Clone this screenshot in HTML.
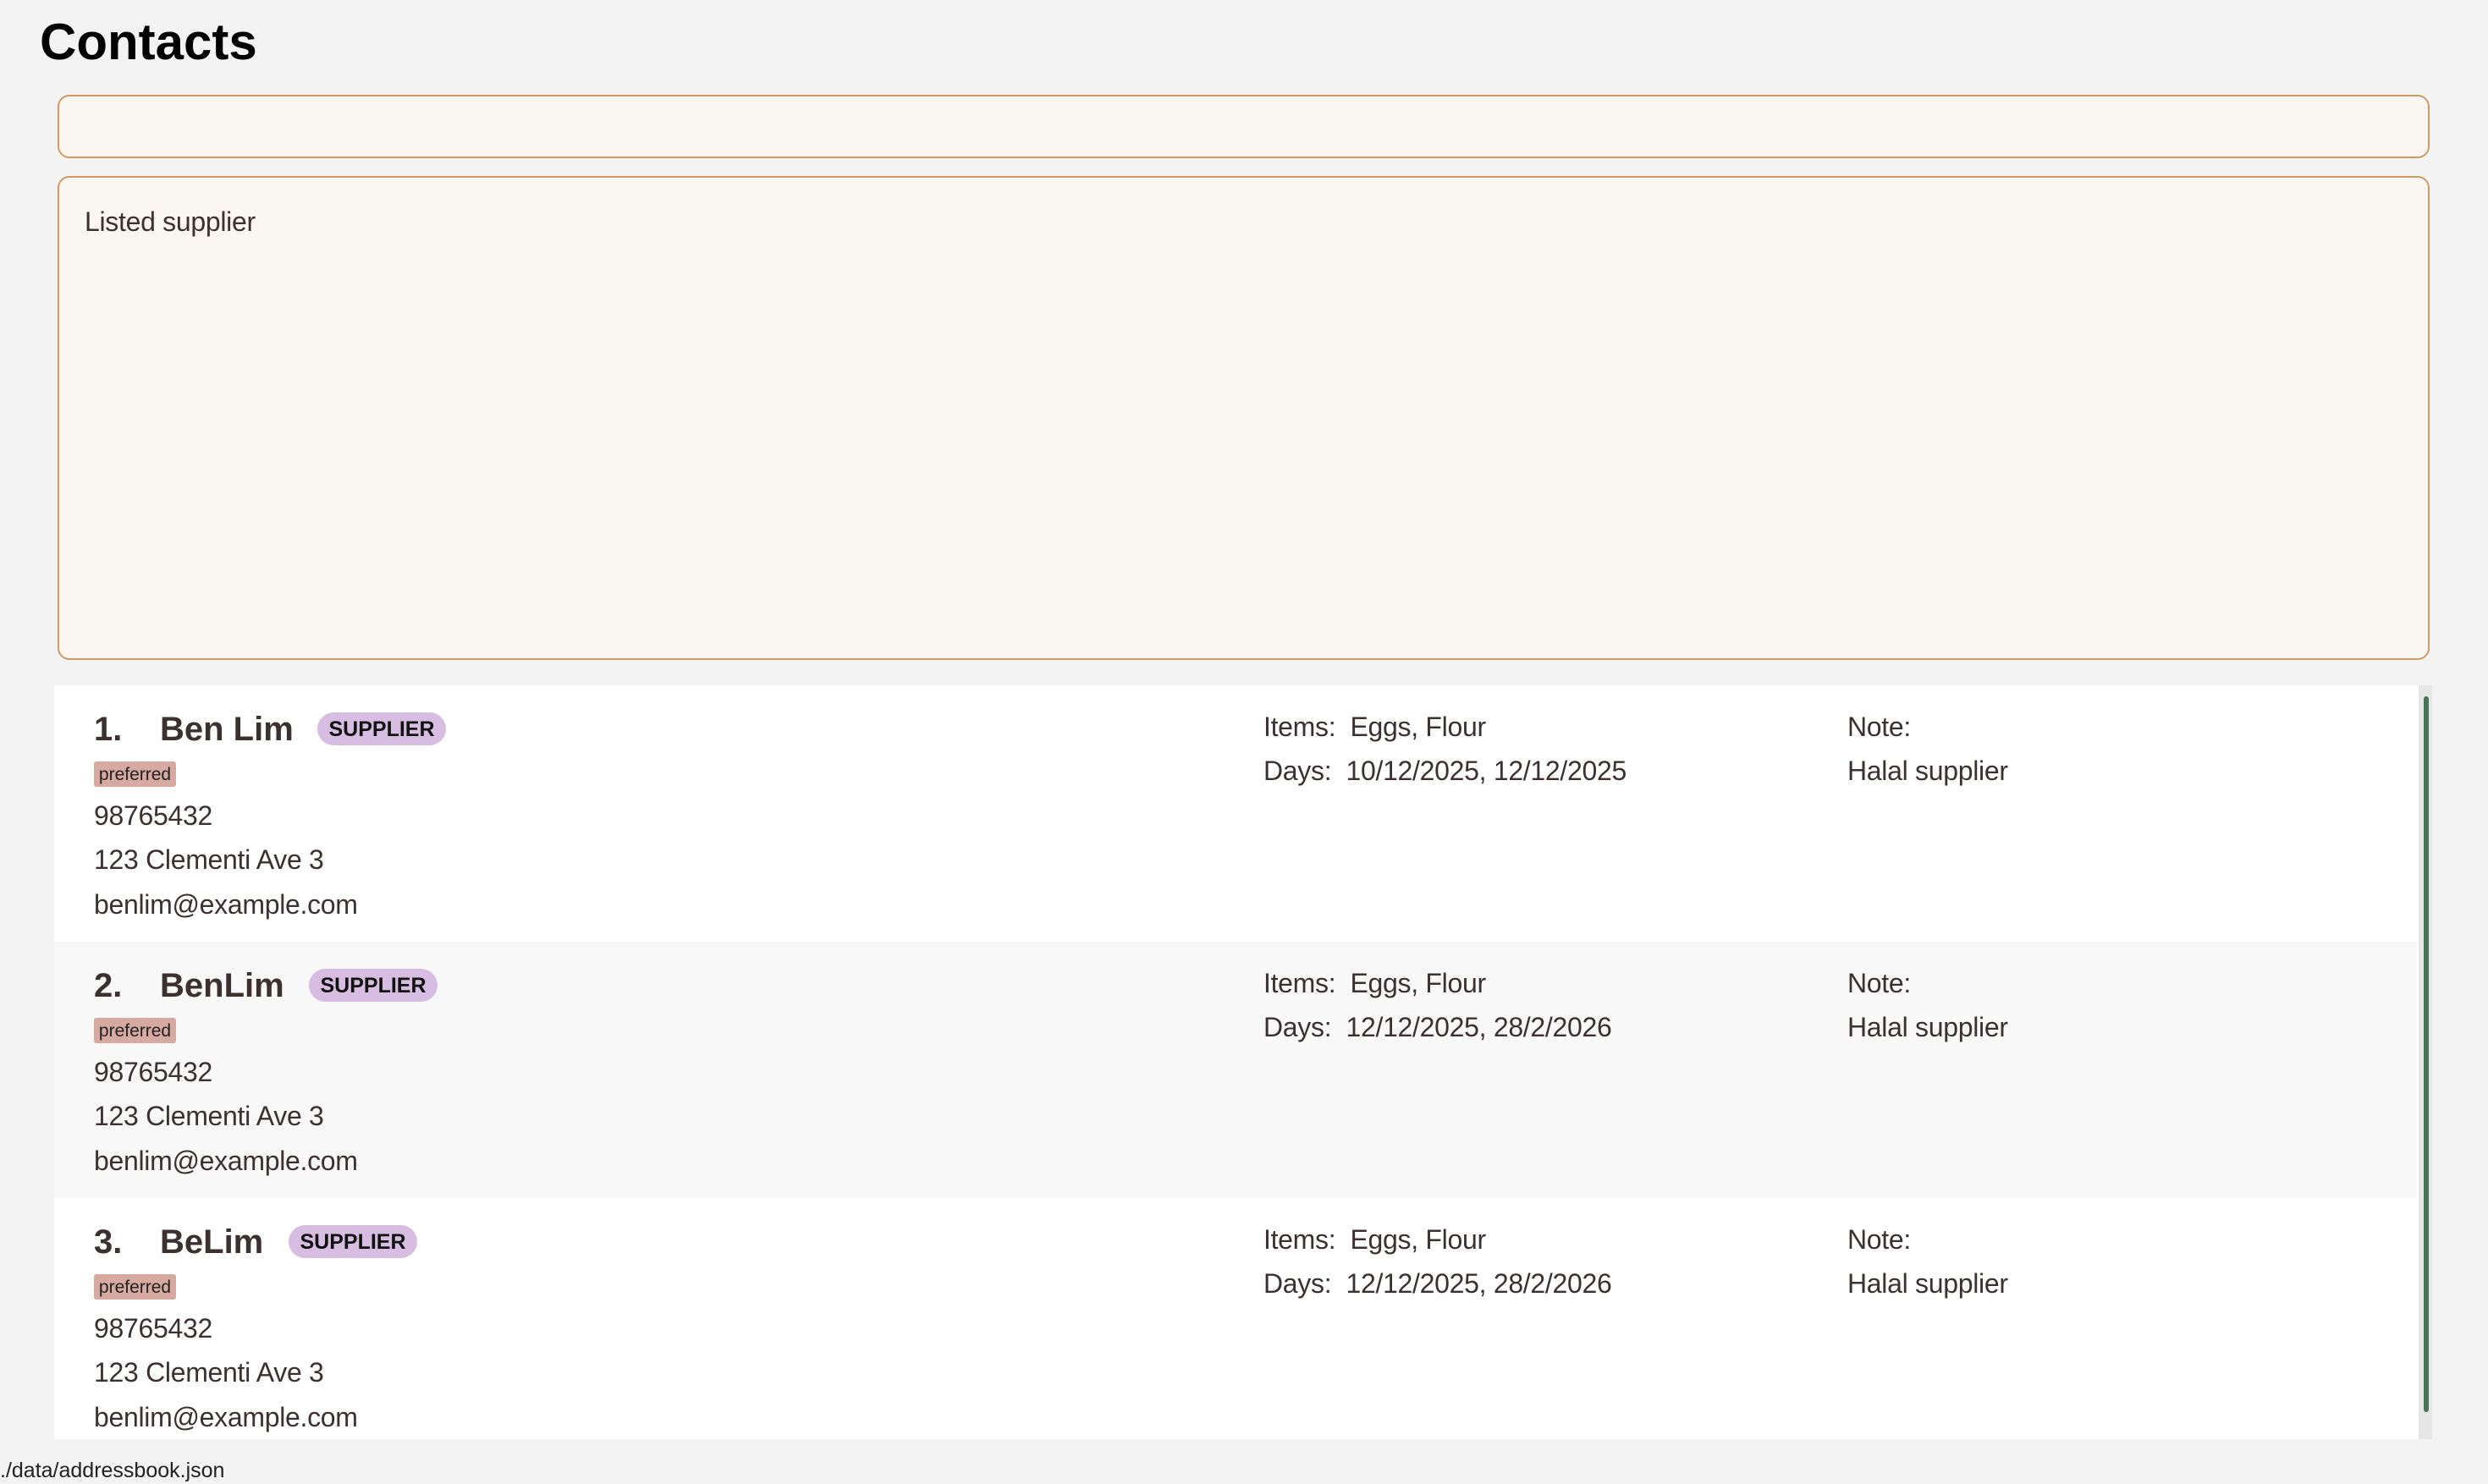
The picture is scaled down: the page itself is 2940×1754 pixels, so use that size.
<!DOCTYPE html>
<html><head><meta charset="utf-8"><style>
*{margin:0;padding:0;box-sizing:border-box}
body{width:2940px;height:1754px;background:#f3f3f3;position:relative;overflow:hidden;font-family:"Liberation Sans",sans-serif;color:#3b3131}
.abs{position:absolute;white-space:nowrap}
.title{left:47px;top:12px;font-size:60px;font-weight:bold;color:#000;line-height:76px}
.box{position:absolute;left:68px;width:2803px;background:#faf7f2;border:2px solid #cf9a66;border-radius:14px}
.row{position:absolute;left:64px;width:2792px;height:303px}
.t{position:absolute;white-space:nowrap;font-size:32px;line-height:52px;color:#3b3131;margin-top:2px;letter-spacing:-0.3px}
.name{font-size:40px;font-weight:bold;line-height:52px;letter-spacing:0}
.pill{position:absolute;background:#d7bde2;border-radius:20px;font-size:25px;font-weight:bold;color:#111;height:39px;line-height:41px;text-align:center}
.pref{position:absolute;left:47px;top:90px;width:97px;height:30px;background:#d6a9a1;border-radius:3px;font-size:21px;line-height:32px;color:#222;text-align:center}
</style></head><body>
<div class="abs title">Contacts</div>
<div class="box" style="top:112px;height:75px"></div>
<div class="box" style="top:208px;height:572px"></div>
<div class="abs" style="left:100px;top:242px;font-size:32px;line-height:40px;color:#3b3131;letter-spacing:-0.3px">Listed supplier</div>

<div style="position:absolute;left:64px;top:810px;width:2794px;height:891px;background:#fff"></div>
<div style="position:absolute;left:2858px;top:810px;width:16px;height:891px;background:#e6e6e6"></div>
<div style="position:absolute;left:2864px;top:823px;width:6px;height:846px;background:#4a7358;border-radius:3px"></div>

<div class="row" style="top:810px;background:#fff">
<div class="t name" style="left:47px;top:24px">1.</div>
<div class="t name" style="left:125px;top:24px">Ben Lim</div>
<div class="pill" style="left:311px;top:32px;width:152px">SUPPLIER</div>
<div class="pref">preferred</div>
<div class="t" style="left:47px;top:126px">98765432</div>
<div class="t" style="left:47px;top:178px">123 Clementi Ave 3</div>
<div class="t" style="left:47px;top:231px">benlim@example.com</div>
<div class="t" style="left:1429px;top:21px">Items:&nbsp; Eggs, Flour</div>
<div class="t" style="left:1429px;top:73px">Days:&nbsp; 10/12/2025, 12/12/2025</div>
<div class="t" style="left:2119px;top:21px">Note:</div>
<div class="t" style="left:2119px;top:73px">Halal supplier</div>
</div>

<div class="row" style="top:1113px;background:#f8f8f8">
<div class="t name" style="left:47px;top:24px">2.</div>
<div class="t name" style="left:125px;top:24px">BenLim</div>
<div class="pill" style="left:301px;top:32px;width:152px">SUPPLIER</div>
<div class="pref">preferred</div>
<div class="t" style="left:47px;top:126px">98765432</div>
<div class="t" style="left:47px;top:178px">123 Clementi Ave 3</div>
<div class="t" style="left:47px;top:231px">benlim@example.com</div>
<div class="t" style="left:1429px;top:21px">Items:&nbsp; Eggs, Flour</div>
<div class="t" style="left:1429px;top:73px">Days:&nbsp; 12/12/2025, 28/2/2026</div>
<div class="t" style="left:2119px;top:21px">Note:</div>
<div class="t" style="left:2119px;top:73px">Halal supplier</div>
</div>

<div class="row" style="top:1416px;background:#fff;height:285px">
<div class="t name" style="left:47px;top:24px">3.</div>
<div class="t name" style="left:125px;top:24px">BeLim</div>
<div class="pill" style="left:277px;top:32px;width:152px">SUPPLIER</div>
<div class="pref">preferred</div>
<div class="t" style="left:47px;top:126px">98765432</div>
<div class="t" style="left:47px;top:178px">123 Clementi Ave 3</div>
<div class="t" style="left:47px;top:231px">benlim@example.com</div>
<div class="t" style="left:1429px;top:21px">Items:&nbsp; Eggs, Flour</div>
<div class="t" style="left:1429px;top:73px">Days:&nbsp; 12/12/2025, 28/2/2026</div>
<div class="t" style="left:2119px;top:21px">Note:</div>
<div class="t" style="left:2119px;top:73px">Halal supplier</div>
</div>

<div class="abs" style="left:0;top:1722px;font-size:25px;line-height:32px;color:#222">./data/addressbook.json</div>
</body></html>
